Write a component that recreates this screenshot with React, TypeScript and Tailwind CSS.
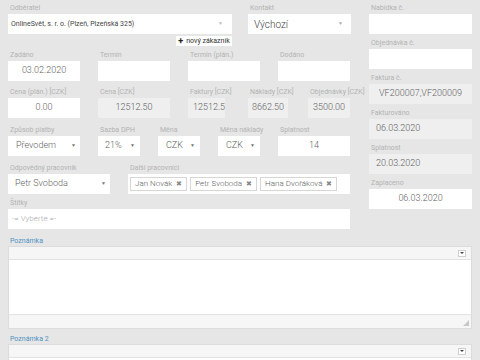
import React from 'react';

const Label: React.FC<{ text: string; className?: string }> = ({ text, className = '' }) => (
  <div className={`h-[10px] pb-[2px] text-[7px] leading-[8px] text-[#b3b3b3] whitespace-nowrap pl-[2px] ${className}`}>{text}</div>
);

const Box: React.FC<{
  value?: string;
  gray?: boolean;
  align?: 'left' | 'center';
  className?: string;
  textClass?: string;
}> = ({ value = '', gray = false, align = 'center', className = '', textClass = 'text-[9px] text-[#5f5f5f] font-light' }) => (
  <div
    className={`h-[20px] flex items-center overflow-hidden whitespace-nowrap ${gray ? 'bg-[#efefef]' : 'bg-white'} ${
      align === 'center' ? 'justify-center' : 'justify-start pl-[7px]'
    } ${textClass} ${className}`}
  >
    {value}
  </div>
);

const Select: React.FC<{ value: string; className?: string; textClass?: string; pad?: string; arrow?: string }> = ({
  value,
  className = '',
  textClass = 'text-[9px] text-[#5f5f5f] font-light',
  pad = 'pl-[8px] pr-[4px]',
  arrow = 'text-[#777]',
}) => (
  <div className={`h-[20px] bg-white flex items-center justify-between whitespace-nowrap ${pad} ${textClass} ${className}`}>
    <span>{value}</span>
    <span className={`text-[5px] ${arrow}`}>▼</span>
  </div>
);

const Field: React.FC<{ label: string; className?: string; children: React.ReactNode }> = ({ label, className = '', children }) => (
  <div className={`flex flex-col ${className}`}>
    <Label text={label} />
    {children}
  </div>
);

const Tag: React.FC<{ name: string }> = ({ name }) => (
  <div className="h-[14px] border border-[#d6d6d6] bg-white px-[4px] flex items-center gap-[4px] text-[8px] font-light text-[#5f5f5f] whitespace-nowrap">
    <span>{name}</span>
    <span className="text-[7px] text-[#888]">✖</span>
  </div>
);

const Editor: React.FC<{ label: string }> = ({ label }) => (
  <div className="flex flex-col">
    <div className="h-[8px] text-[7px] leading-[8px] text-[#4f93c2] pl-[2px] mb-[1px]">{label}</div>
    <div className="border border-[#dcdcdc] bg-white">
      <div className="h-[13px] bg-[#f6f6f6] border-b border-[#e2e2e2] flex items-center justify-end pr-[5px]">
        <div className="w-[8px] h-[7px] bg-white border border-[#cfcfcf] flex items-center justify-center">
          <div className="w-0 h-0 border-l-[2px] border-r-[2px] border-t-[2px] border-l-transparent border-r-transparent border-t-[#444]" />
        </div>
      </div>
      <div className="h-[54px] bg-white" />
      <div className="h-[14px] bg-[#f6f6f6] border-t border-[#e2e2e2] flex items-end justify-end pr-[2px] pb-[2px]">
        <svg width="6" height="6" viewBox="0 0 6 6">
          <path d="M6 0 L6 6 L0 6 Z" fill="#c8c8c8" />
        </svg>
      </div>
    </div>
  </div>
);

export default function App() {
  return (
    <div
      className="w-[480px] h-[360px] overflow-hidden bg-[#e6e6e6] text-[#555]"
      style={{ fontFamily: 'Roboto, "Liberation Sans", sans-serif' }}
    >
      <div className="flex pt-[4px]">
        {/* left area */}
        <div className="w-[352px] pl-[8px] flex flex-col">
          <div className="flex gap-[16px]">
            <Field label="Odběratel" className="w-[224px]">
              <Select
                value="OnlineSvět, s. r. o. (Plzeň, Plzeňská 325)"
                textClass="text-[7px] text-[#444]"
                pad="pl-[3px] pr-[9px]"
                arrow="text-[#bbb]"
              />
            </Field>
            <Field label="Kontakt" className="w-[103px]">
              <Select value="Výchozí" textClass="text-[10px] text-[#444] font-light" pad="pl-[6px] pr-[8px]" arrow="text-[#aaa]" />
            </Field>
          </div>
          <div className="flex justify-start pl-[168px] mt-[2px]">
            <div className="h-[10px] w-[56px] bg-white flex items-center justify-center gap-[3px] text-[7px] text-[#333] whitespace-nowrap">
              <span className="font-bold text-[9px] leading-[9px] text-[#222]">+</span>
              <span>nový zákazník</span>
            </div>
          </div>

          <div className="flex gap-[18px] mt-[5px]">
            <Field label="Zadáno" className="w-[72px]">
              <Box value="03.02.2020" />
            </Field>
            <Field label="Termín" className="w-[72px]">
              <Box />
            </Field>
            <Field label="Termín (plán.)" className="w-[72px]">
              <Box />
            </Field>
            <Field label="Dodáno" className="w-[72px]">
              <Box />
            </Field>
          </div>

          <div className="flex mt-[7px]">
            <Field label="Cena (plán.) [CZK]" className="w-[72px]">
              <Box value="0.00" />
            </Field>
            <Field label="Cena [CZK]" className="w-[72px] ml-[18px]">
              <Box value="12512.50" gray />
            </Field>
            <Field label="Faktury [CZK]" className="w-[37px] ml-[18px]">
              <Box value="12512.50" gray align="left" className="!pl-[5px]" />
            </Field>
            <Field label="Náklady [CZK]" className="w-[40px] ml-[23px]">
              <Box value="8662.50" gray />
            </Field>
            <Field label="Objednávky [CZK]" className="w-[42px] ml-[20px]">
              <Box value="3500.00" gray />
            </Field>
          </div>

          <div className="flex mt-[8px]">
            <Field label="Způsob platby" className="w-[72px]">
              <Select value="Převodem" />
            </Field>
            <Field label="Sazba DPH" className="w-[42px] ml-[18px]">
              <Select value="21%" pad="pl-[7px] pr-[5px]" />
            </Field>
            <Field label="Měna" className="w-[42px] ml-[18px]">
              <Select value="CZK" pad="pl-[8px] pr-[5px]" />
            </Field>
            <Field label="Měna náklady" className="w-[42px] ml-[18px]">
              <Select value="CZK" pad="pl-[8px] pr-[5px]" />
            </Field>
            <Field label="Splatnost" className="w-[72px] ml-[18px]">
              <Box value="14" />
            </Field>
          </div>

          <div className="flex mt-[8px]">
            <Field label="Odpovědný pracovník" className="w-[102px]">
              <Select value="Petr Svoboda" pad="pl-[7px] pr-[4px]" />
            </Field>
            <Field label="Další pracovníci" className="w-[222px] ml-[18px]">
              <div className="h-[20px] bg-white flex items-center gap-[3px] pl-[2px]">
                <Tag name="Jan Novák" />
                <Tag name="Petr Svoboda" />
                <Tag name="Hana Dvořáková" />
              </div>
            </Field>
          </div>

          <Field label="Štítky" className="mt-[5px] w-[342px]">
            <Box value="-= Vyberte =-" align="left" className="!pl-[4px]" textClass="text-[8px] text-[#aaa] font-light" />
          </Field>
        </div>

        {/* right column */}
        <div className="w-[103px] ml-[17px] flex flex-col gap-[5px]">
          <Field label="Nabídka č.">
            <Box />
          </Field>
          <Field label="Objednávka č.">
            <Box />
          </Field>
          <Field label="Faktura č.">
            <Box value="VF200007,VF200009" gray />
          </Field>
          <Field label="Fakturováno">
            <Box value="06.03.2020" gray align="left" />
          </Field>
          <Field label="Splatnost">
            <Box value="20.03.2020" gray align="left" />
          </Field>
          <Field label="Zaplaceno">
            <Box value="06.03.2020" />
          </Field>
        </div>
      </div>

      <div className="px-[8px] mt-[8px] flex flex-col gap-[6px]">
        <Editor label="Poznámka" />
        <Editor label="Poznámka 2" />
      </div>
    </div>
  );
}
